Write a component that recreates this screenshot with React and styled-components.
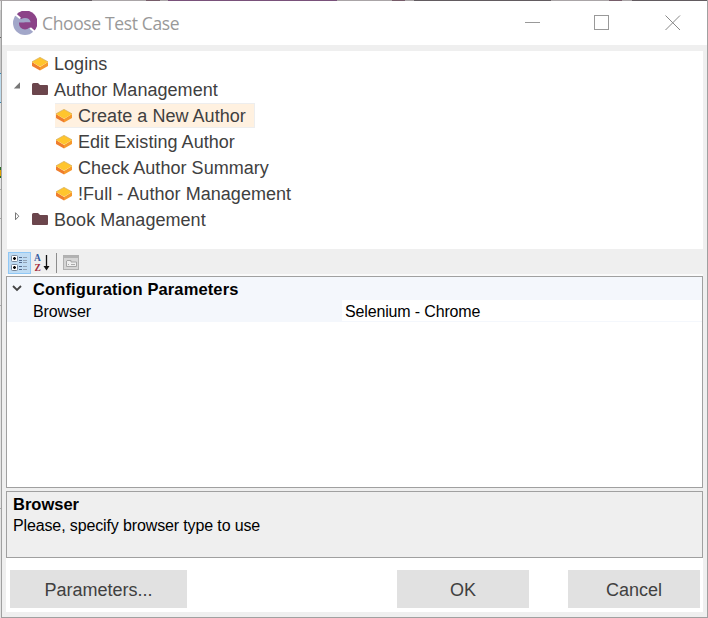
import React from 'react';
import styled, { createGlobalStyle } from 'styled-components';

const Global = createGlobalStyle`
  * { box-sizing: border-box; }
  body { margin: 0; overflow: hidden; background: #c9c9c9; font-family: "Liberation Sans", Arial, sans-serif; }
  svg { display: block; flex: none; }
`;

const Desktop = styled.main`
  width: 708px;
  height: 618px;
  padding: 1px 0 0 1px;
  background:
    linear-gradient(90deg, transparent 30px, #625b60 30px 92px, transparent 92px 146px, #765c69 146px 160px, transparent 160px 168px, #79517a 168px 337px, transparent 337px 392px, #765c69 392px 405px, transparent 405px 414px, #625b60 414px 551px, transparent 551px 609px, #765c69 609px 622px, transparent 622px 632px, #625b60 632px 707px, transparent 707px) 0 0 / 708px 1px no-repeat,
    linear-gradient(#aaa5a7, #aaa5a7) 0 0 / 708px 1px no-repeat,
    linear-gradient(#e4e4e4 0 10px, #c9c9c9 10px 37px, #666 37px 38px, #c9c9c9 38px 73px, #3885b0 73px 74px, #bddbed 74px 102px, #3885b0 102px 103px, #e4e4e4 103px 167px, #286d24 167px 170px, #dda000 170px 176px, #286d24 176px 178px, #e4e4e4 178px 189px, #aaa 189px 190px, #e4e4e4 190px 218px, #aaa 218px 219px, #e4e4e4 219px 305px, #aaa 305px 306px, #e4e4e4 306px 508px, #aaa 508px 509px, #e4e4e4 509px) 0 0 / 1px 618px no-repeat;
`;

const Dialog = styled.section`
  width: 707px;
  height: 617px;
  display: flex;
  flex-direction: column;
  background: #efefef;
  border: solid #a0a0a0;
  border-width: 0 1px 1px;
`;

const TitleBar = styled.header`
  height: 44px;
  flex: none;
  display: flex;
  align-items: center;
  background: #fff;
  padding-left: 11px;
`;

const Title = styled.h1`
  margin: 0 0 0 5px;
  flex: 1;
  font: 400 17.5px/26px "Open Sans", sans-serif;
  letter-spacing: -0.36px;
  color: #999;
`;

const WindowControls = styled.div`
  display: flex;
  gap: 53px;
  padding-right: 26px;
`;

const Tree = styled.ul`
  list-style: none;
  margin: 6px 4px 0 5px;
  padding: 0;
  height: 198px;
  background: #fff;
`;

const TreeItem = styled.li`
  height: 26px;
  display: flex;
  align-items: flex-start;
  padding-left: ${({ $level }) => ($level ? 48 : 0)}px;
`;

const Expander = styled.span`
  width: 24px;
  height: 26px;
  flex: none;
  padding: 5px 0 0 6px;
`;

const TreeLabel = styled.span`
  display: flex;
  align-items: center;
  gap: 5px;
  height: 25px;
  padding: 0 8px 0 1px;
  border: 1px solid ${({ $selected }) => ($selected ? '#eeeeee' : 'transparent')};
  border-left: 0;
  background: ${({ $selected }) => ($selected ? '#fff1e0' : 'transparent')};
  color: #404040;
  font-size: 18px;
  line-height: 23px;
  letter-spacing: 0.04px;
  white-space: pre;
`;

const TreeText = styled.span`
  padding-top: 1px;
`;

const Toolbar = styled.div`
  height: 25px;
  flex: none;
  display: flex;
  align-items: center;
  padding: 2px 0 0 6px;
`;

const ToolButton = styled.button`
  width: ${({ $width }) => $width}px;
  height: 22px;
  display: flex;
  align-items: center;
  justify-content: center;
  padding: 0;
  border: 1px solid ${({ $active }) => ($active ? '#90c8f6' : 'transparent')};
  background: ${({ $active }) => ($active ? '#c0dcf3' : 'transparent')};
`;

const ToolDivider = styled.span`
  width: 1px;
  height: 20px;
  margin: 0 3px 0 2px;
  background: #8d8d8d;
`;

const PropertyGrid = styled.section`
  height: 214px;
  margin: 0 4px;
  border-top: 2px solid #fafafa;
`;

const GridFrame = styled.div`
  height: 212px;
  border: 1px solid #a0a0a0;
  background: #fff;
`;

const CategoryRow = styled.div`
  height: 23px;
  display: flex;
  align-items: center;
  background: #f4f7fc;
`;

const GridExpander = styled.span`
  width: 26px;
  padding-left: 5px;
`;

const CategoryName = styled.strong`
  font-size: 16.5px;
  line-height: 22px;
  letter-spacing: 0.12px;
  color: #000;
`;

const PropertyRow = styled.div`
  height: 22px;
  display: flex;
  font-size: 16px;
  line-height: 23px;
  border-bottom: 1px solid #f4f7fc;
  color: #000;
`;

const PropertyName = styled.span`
  width: 335px;
  height: 22px;
  padding-left: 26px;
  letter-spacing: -0.1px;
  background: #f4f7fc;
`;

const PropertyValue = styled.span`
  padding-left: 3px;
  letter-spacing: -0.15px;
`;

const HelpPanel = styled.section`
  height: 67px;
  margin: 3px 4px 0;
  padding: 2px 6px;
  border: 1px solid #a0a0a0;
  font-size: 16px;
  line-height: 21px;
  color: #000;
`;

const HelpTitle = styled.strong`
  display: block;
  font-size: 16.5px;
`;

const HelpText = styled.p`
  margin: 0;
  letter-spacing: -0.13px;
`;

const Footer = styled.footer`
  height: 54px;
  margin: 0 4px;
  display: flex;
  padding: 12px 3px 4px 4px;
  background: #fff;
`;

const Spacer = styled.span`
  flex: 1;
`;

const Button = styled.button`
  width: ${({ $width }) => $width}px;
  height: 38px;
  margin-left: ${({ $gap }) => $gap || 0}px;
  padding: 2px 0 0;
  border: 0;
  background: #e1e1e1;
  color: #404040;
  font: 18px/24px "Liberation Sans", Arial, sans-serif;
`;

const Logo = () => (
  <svg width="24" height="24" viewBox="0 0 24 24">
    <circle cx="12" cy="12" r="12" fill="#a2a7c9" />
    <path d="M4 3A12 12 0 0 1 21 20L16.5 16.5L12 12L7.8 7.8Z" fill="#8c4388" />
    <path d="M6.2 11.5A6 6 0 0 1 17.8 11.5Z" fill="#a2a7c9" />
    <path d="M6 11.5H18V12.5A6 6 0 0 1 6 12.5Z" fill="#8c4388" />
    <path d="M2.5 3.5 7.2 7.3M17.2 16.9 21.6 20.8" stroke="#fff" strokeWidth="2" />
  </svg>
);

const TestIcon = () => (
  <svg width="17" height="14" viewBox="0 0 17 14">
    <path d="M0 5 8 10V13.5L0 9Z" fill="#ef7d2d" />
    <path d="M8 10 16 5V9L8 13.5Z" fill="#f6992c" />
    <path d="M0 5 8 .4 16 5 8 9.8Z" fill="#ffc52d" />
    <path d="M0 4.8 8 .4 16 4.8" fill="none" stroke="#d3a64b" strokeWidth=".7" />
  </svg>
);

const FolderIcon = () => (
  <svg width="17" height="13" viewBox="0 0 17 13">
    <path d="M1.5 0H6L8 2H15Q16 2 16 3V11Q16 12 15 12H1Q0 12 0 11V1.5Q0 0 1.5 0Z" fill="#6b454c" />
  </svg>
);

const OpenArrow = () => (
  <svg width="8" height="8" viewBox="0 0 8 8"><path d="M.8 6.5H7V.3Z" fill="#777" /></svg>
);

const ClosedArrow = () => (
  <svg width="8" height="10" viewBox="0 0 8 10"><path d="M2.5 .7V7.8L5.8 4.2Z" fill="#fff" stroke="#777" /></svg>
);

const CategorizedIcon = () => (
  <svg width="18" height="18" viewBox="0 0 18 18">
    <g fill="#fff" stroke="#79889b"><rect x=".5" y="1.5" width="6" height="6" rx="1" /><rect x=".5" y="10.5" width="6" height="6" rx="1" /></g>
    <path d="M2 4.5H5M3.5 3V6M2 13.5H5M3.5 12V15" stroke="#000" strokeWidth="1.4" />
    <path d="M8 3.5H11M8 6.5H11M8 8.5H11M8 12.5H11M8 15.5H11" stroke="#526a8e" />
    <path d="M12 3.5H16M12 6.5H16M12 8.5H16M12 12.5H16M12 15.5H16" stroke="#90a1b4" />
  </svg>
);

const SortIcon = () => (
  <svg width="17" height="18" viewBox="0 0 17 18" fontFamily="Liberation Serif, serif" fontSize="9.5" fontWeight="700">
    <text x="0" y="7" fill="#365ca2">A</text>
    <text x="0.5" y="17" fill="#a02c3c">Z</text>
    <path d="M12.5 1V14" stroke="#111" strokeWidth="1.3" />
    <path d="M9.5 12H15.5L12.5 16.5Z" fill="#111" />
  </svg>
);

const PagesIcon = () => (
  <svg width="16" height="16" viewBox="0 0 16 16">
    <rect x=".5" y=".5" width="15" height="14" fill="#d5d5d5" stroke="#b0b0b0" />
    <path d="M1 2H15" stroke="#b2b2b2" strokeWidth="2" />
    <path d="M3.5 6V11.5H13.5V7H8V5.5H4Z" fill="#eee" stroke="#a5a5a5" />
    <path d="M5 9.5H6M8 9.5H12" stroke="#aaa" />
  </svg>
);

const Chevron = () => (
  <svg width="10" height="7" viewBox="0 0 10 7"><path d="M1 1 5 5 9 1" fill="none" stroke="#444" strokeWidth="1.8" /></svg>
);

const nodes = [
  { name: 'Logins', level: 0 },
  { name: 'Author Management', level: 0, folder: true, open: true },
  { name: 'Create a New Author', level: 1, selected: true },
  { name: 'Edit Existing Author', level: 1 },
  { name: 'Check Author Summary', level: 1 },
  { name: '!Full - Author Management', level: 1 },
  { name: 'Book Management', level: 0, folder: true },
];

export default function App() {
  return (
    <>
      <Global />
      <Desktop>
        <Dialog>
          <TitleBar>
            <Logo />
            <Title>Choose Test Case</Title>
            <WindowControls>
              <svg width="16" height="16"><path d="M0 7.5H15" stroke="#999" /></svg>
              <svg width="16" height="16"><rect x=".5" y=".5" width="14" height="14" fill="none" stroke="#999" /></svg>
              <svg width="18" height="16" viewBox="-2 0 18 16"><path d="M.5.5 15 15M15 .5.5 15" stroke="#888" /></svg>
            </WindowControls>
          </TitleBar>
          <Tree>
            {nodes.map(({ name, level, folder, open, selected }) => (
              <TreeItem key={name} $level={level}>
                {!level && <Expander>{folder && (open ? <OpenArrow /> : <ClosedArrow />)}</Expander>}
                <TreeLabel $selected={selected}>
                  {folder ? <FolderIcon /> : <TestIcon />}
                  <TreeText>{name}</TreeText>
                </TreeLabel>
              </TreeItem>
            ))}
          </Tree>
          <Toolbar>
            <ToolButton $width={23} $active aria-label="Categorized"><CategorizedIcon /></ToolButton>
            <ToolButton $width={23} aria-label="Alphabetical"><SortIcon /></ToolButton>
            <ToolDivider />
            <ToolButton $width={22} aria-label="Property pages"><PagesIcon /></ToolButton>
          </Toolbar>
          <PropertyGrid>
            <GridFrame>
              <CategoryRow><GridExpander><Chevron /></GridExpander><CategoryName>Configuration Parameters</CategoryName></CategoryRow>
              <PropertyRow><PropertyName>Browser</PropertyName><PropertyValue>Selenium - Chrome</PropertyValue></PropertyRow>
            </GridFrame>
          </PropertyGrid>
          <HelpPanel>
            <HelpTitle>Browser</HelpTitle>
            <HelpText>Please, specify browser type to use</HelpText>
          </HelpPanel>
          <Footer>
            <Button $width={177}>Parameters...</Button>
            <Spacer />
            <Button $width={132}>OK</Button>
            <Button $width={132} $gap={39}>Cancel</Button>
          </Footer>
        </Dialog>
      </Desktop>
    </>
  );
}
